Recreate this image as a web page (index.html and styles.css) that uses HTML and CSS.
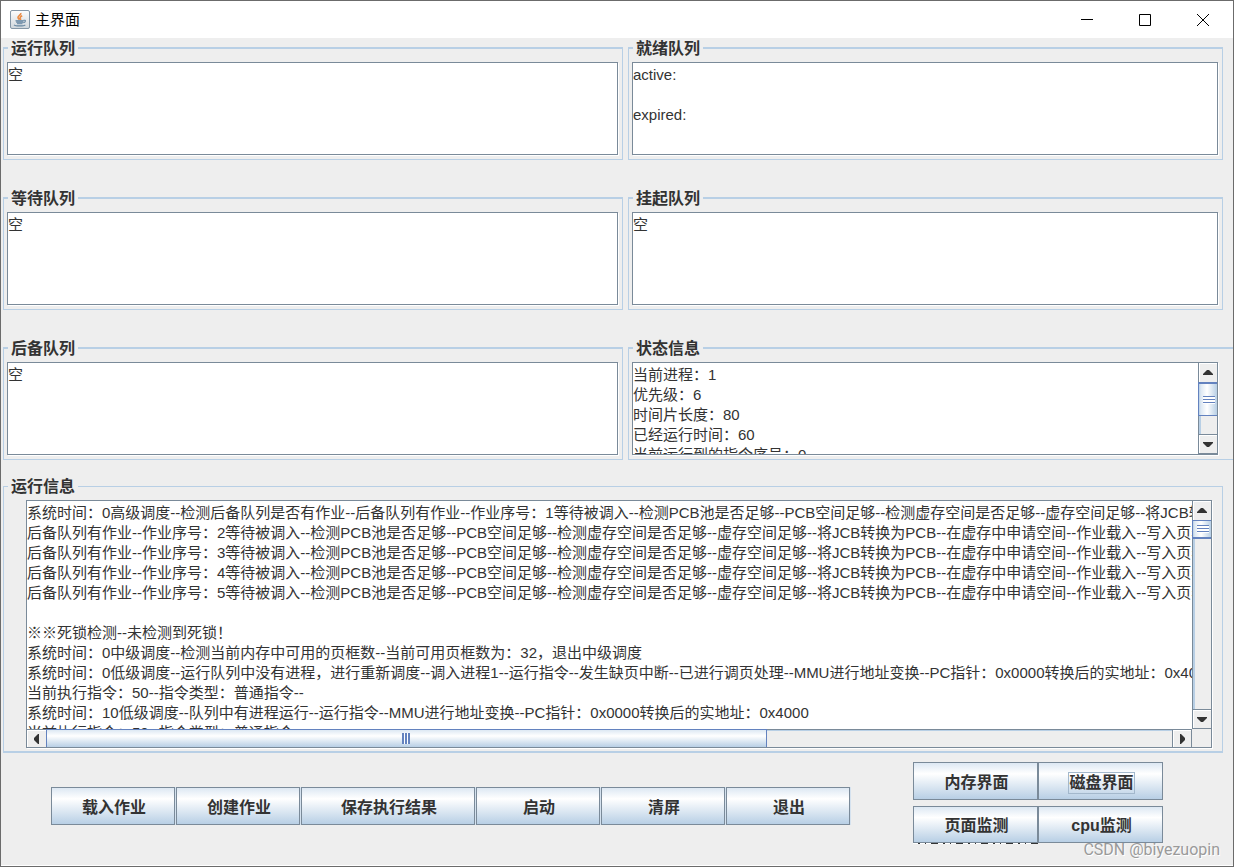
FILE: index.html
```html
<!DOCTYPE html>
<html lang="zh-CN">
<head>
<meta charset="utf-8">
<title>主界面</title>
<link rel="stylesheet" href="styles.css">
</head>
<body>
<div class="window">
  <header class="titlebar">
    <svg class="app-icon" viewBox="0 0 20 19" aria-hidden="true">
      <defs><linearGradient id="tile" x1="0" y1="0" x2="0" y2="1"><stop offset="0" stop-color="#fdfdfd"/><stop offset="1" stop-color="#cfd6dc"/></linearGradient></defs>
      <rect x="0.5" y="0.5" width="19" height="18" rx="1.500" fill="url(#tile)" stroke="#8496a6"/>
      <path d="M10.800 3c.8 1.800-3 2.700-2.800 4.500 0 1 1.200 1.500 1.500 2.300M12.200 5.700c-1.700.8-2.400 1.500-2 2.600.3.700.8.800.1 1.700" fill="none" stroke="#ea8a42" stroke-width="1.600"/>
      <path d="M5.500 10.700h8.300M6.200 12.200h7M7 13.500h5.500" fill="none" stroke="#7d98b0" stroke-width="1.400"/>
      <path d="M13.500 10.300c2.600-.6 2.600 1.800-.2 2.500M4 14.800c1.500 1.500 10 1.400 11.300 0" fill="none" stroke="#6585a0" stroke-width="1.100"/>
    </svg>
    <h1 class="title">主界面</h1>
    <div class="controls">
      <button class="control" type="button" aria-label="最小化"><svg viewBox="0 0 12 12"><path d="M0 5.500h12"/></svg></button>
      <button class="control" type="button" aria-label="最大化"><svg viewBox="0 0 12 12"><path d="M.5.5h11v11H.5z"/></svg></button>
      <button class="control" type="button" aria-label="关闭"><svg viewBox="0 0 12 12"><path d="M0 0l12 12M12 0L0 12"/></svg></button>
    </div>
  </header>

  <main class="content">
    <div class="queues">
      <fieldset class="panel">
        <legend>运行队列</legend>
        <div class="box"><textarea class="text" aria-label="运行队列" wrap="off" readonly>空</textarea></div>
      </fieldset>
      <fieldset class="panel">
        <legend>就绪队列</legend>
        <div class="box"><textarea class="text" aria-label="就绪队列" wrap="off" readonly>active:

expired:</textarea></div>
      </fieldset>
      <fieldset class="panel">
        <legend>等待队列</legend>
        <div class="box"><textarea class="text" aria-label="等待队列" wrap="off" readonly>空</textarea></div>
      </fieldset>
      <fieldset class="panel">
        <legend>挂起队列</legend>
        <div class="box"><textarea class="text" aria-label="挂起队列" wrap="off" readonly>空</textarea></div>
      </fieldset>
      <fieldset class="panel">
        <legend>后备队列</legend>
        <div class="box"><textarea class="text" aria-label="后备队列" wrap="off" readonly>空</textarea></div>
      </fieldset>
      <fieldset class="panel panel-open">
        <legend>状态信息</legend>
        <div class="box box-v">
          <textarea class="text" aria-label="状态信息" wrap="off" readonly>当前进程：1
优先级：6
时间片长度：80
已经运行时间：60
当前运行到的指令序号：0</textarea>
          <div class="vbar">
            <button class="arrow" type="button" aria-label="向上"><svg viewBox="0 0 10 5"><path d="M4 0h2l4 4v1H0V4z"/></svg></button>
            <div class="track"><div class="thumb thumb-status"><span class="grip"></span></div></div>
            <button class="arrow" type="button" aria-label="向下"><svg viewBox="0 0 10 5"><path d="M0 0h10v1L6 5H4L0 1z"/></svg></button>
          </div>
        </div>
      </fieldset>
    </div>

    <fieldset class="panel panel-log">
      <legend>运行信息</legend>
      <div class="box box-v box-log">
        <textarea class="text" aria-label="运行信息" wrap="off" readonly>系统时间：0高级调度--检测后备队列是否有作业--后备队列有作业--作业序号：1等待被调入--检测PCB池是否足够--PCB空间足够--检测虚存空间是否足够--虚存空间足够--将JCB转换为PCB
后备队列有作业--作业序号：2等待被调入--检测PCB池是否足够--PCB空间足够--检测虚存空间是否足够--虚存空间足够--将JCB转换为PCB--在虚存中申请空间--作业载入--写入页表
后备队列有作业--作业序号：3等待被调入--检测PCB池是否足够--PCB空间足够--检测虚存空间是否足够--虚存空间足够--将JCB转换为PCB--在虚存中申请空间--作业载入--写入页表
后备队列有作业--作业序号：4等待被调入--检测PCB池是否足够--PCB空间足够--检测虚存空间是否足够--虚存空间足够--将JCB转换为PCB--在虚存中申请空间--作业载入--写入页表
后备队列有作业--作业序号：5等待被调入--检测PCB池是否足够--PCB空间足够--检测虚存空间是否足够--虚存空间足够--将JCB转换为PCB--在虚存中申请空间--作业载入--写入页表

※※死锁检测--未检测到死锁！
系统时间：0中级调度--检测当前内存中可用的页框数--当前可用页框数为：32，退出中级调度
系统时间：0低级调度--运行队列中没有进程，进行重新调度--调入进程1--运行指令--发生缺页中断--已进行调页处理--MMU进行地址变换--PC指针：0x0000转换后的实地址：0x4000
当前执行指令：50--指令类型：普通指令--
系统时间：10低级调度--队列中有进程运行--运行指令--MMU进行地址变换--PC指针：0x0000转换后的实地址：0x4000
当前执行指令：50--指令类型：普通指令--</textarea>
        <div class="vbar">
          <button class="arrow" type="button" aria-label="向上"><svg viewBox="0 0 10 5"><path d="M4 0h2l4 4v1H0V4z"/></svg></button>
          <div class="track"><div class="thumb thumb-log"><span class="grip"></span></div></div>
          <button class="arrow" type="button" aria-label="向下"><svg viewBox="0 0 10 5"><path d="M0 0h10v1L6 5H4L0 1z"/></svg></button>
        </div>
        <div class="hbar">
          <button class="arrow" type="button" aria-label="向左"><svg viewBox="0 0 5 10"><path d="M5 0v10H4L0 6V4l4-4z"/></svg></button>
          <div class="track"><div class="thumb"><span class="grip"></span></div></div>
          <button class="arrow" type="button" aria-label="向右"><svg viewBox="0 0 5 10"><path d="M0 0h1l4 4v2l-4 4H0z"/></svg></button>
        </div>
        <div class="corner"></div>
      </div>
    </fieldset>
  </main>

  <footer class="footer">
    <div class="actions">
      <button class="btn" type="button">载入作业</button>
      <button class="btn" type="button">创建作业</button>
      <button class="btn btn-wide" type="button">保存执行结果</button>
      <button class="btn" type="button">启动</button>
      <button class="btn" type="button">清屏</button>
      <button class="btn" type="button">退出</button>
    </div>
    <div class="views">
      <button class="btn" type="button">内存界面</button>
      <button class="btn" type="button"><span class="focus">磁盘界面</span></button>
      <button class="btn" type="button">页面监测</button>
      <button class="btn" type="button">cpu监测</button>
      <div class="sliver"></div>
    </div>
    <p class="watermark">CSDN @biyezuopin</p>
  </footer>
</div>
</body>
</html>
```
FILE: styles.css
```css
* {
  box-sizing: border-box;
}

body {
  margin: 0;
  background: #eeeeee;
  color: #333333;
  font: 15px/20px "Liberation Sans", "Noto Sans CJK SC", sans-serif;
}

button {
  font: inherit;
  color: inherit;
}

.window {
  display: flex;
  flex-direction: column;
  min-height: 100vh;
  border: 1px solid #6b6b6b;
  background: #eeeeee;
  overflow: hidden;
}

/* Title bar */
.titlebar {
  display: flex;
  align-items: center;
  height: 37px;
  padding: 0 1px 0 9px;
  background: #ffffff;
  color: #000000;
}

.app-icon {
  width: 20px;
  height: 19px;
}

.title {
  flex: 1;
  margin: 0 0 0 5px;
  font-size: 15px;
  font-weight: 400;
}

.controls {
  display: flex;
}

.control {
  display: flex;
  align-items: center;
  justify-content: center;
  width: 58px;
  height: 36px;
  padding: 0;
  border: 0;
  background: none;
}

.control svg {
  width: 12px;
  height: 12px;
  fill: none;
  stroke: #000000;
}

/* Titled panels */
.content {
  display: flex;
  flex-direction: column;
  gap: 16px;
  padding: 0 10px 0 2px;
}

.queues {
  display: grid;
  grid-template-columns: minmax(0, 620fr) minmax(0, 595fr);
  gap: 28px 5px;
}

.panel {
  min-width: 0;
  margin: 0;
  padding: 4px 4px 4px 3px;
  border: 1px solid #b8cfe5;
  border-top-width: 2px;
}

.panel legend {
  height: 20px;
  margin-left: 1px;
  padding: 0 3px;
  font-size: 16px;
  font-weight: 700;
  line-height: 22px;
}

.panel-open {
  margin-right: -10px;
  padding-right: 15px;
  border-right: 0;
}

.panel-log {
  padding: 4px 10px 3px 22px;
  border-top-width: 1px;
  border-bottom-width: 2px;
}

.panel-log legend {
  margin-left: -18px;
}

.box {
  display: grid;
  height: 93px;
  border: 1px solid #7a8a99;
  background: #ffffff;
  box-shadow: 1px 1px 0 #ffffff;
}

.box-v {
  grid-template-columns: minmax(0, 1fr) 19px;
}

.box-log {
  grid-template-rows: minmax(0, 1fr) 18px;
  height: 248px;
}

.text {
  display: block;
  width: 100%;
  height: 100%;
  min-height: 0;
  margin: 0;
  padding: 2px 0 0;
  border: 0;
  outline: 0;
  background: #ffffff;
  color: #333333;
  font: inherit;
  white-space: pre;
  overflow: hidden;
  resize: none;
}

/* Scroll bars */
.vbar,
.hbar {
  display: flex;
  min-width: 0;
  min-height: 0;
  background: #eeeeee;
}

.vbar {
  flex-direction: column;
  border-left: 1px solid #7a8a99;
}

.hbar {
  border-top: 1px solid #7a8a99;
}

.arrow {
  display: flex;
  flex: 0 0 19px;
  align-items: center;
  justify-content: center;
  padding: 0;
  border: 0 solid #7a8a99;
  background: #eeeeee;
  box-shadow: inset 1px 1px 0 #ffffff;
}

.vbar .arrow:last-child {
  flex-basis: 20px;
  border-width: 1px 0;
}

.hbar .arrow:last-child {
  flex-basis: 20px;
  border-width: 0 1px;
}

.arrow svg {
  width: 10px;
  height: 5px;
  fill: #333333;
}

.hbar .arrow svg {
  width: 5px;
  height: 10px;
}

.track {
  flex: 1;
  min-width: 0;
  min-height: 0;
}

.vbar .track {
  box-shadow: inset 2px 0 0 #b8cfe5;
}

.hbar .track {
  box-shadow: inset 0 1px 0 #b8cfe5;
}

.thumb {
  display: flex;
  align-items: center;
  justify-content: center;
  border: 0 solid #6382bf;
}

.vbar .thumb {
  margin-left: -1px;
  padding-left: 2px;
  border-width: 1px 0 1px 1px;
  background: linear-gradient(90deg, #b8cfe5, #dde8f3 10%, #ffffff 45%, #b8cfe5);
}

.hbar .thumb {
  width: 64%;
  height: 18px;
  margin-top: -1px;
  border-width: 1px 1px 0;
  background: linear-gradient(#dde8f3, #ffffff 35%, #b8cfe5);
}

.vbar .thumb-status {
  height: 66%;
  border-top-width: 2px;
}

.vbar .thumb-log {
  height: 10%;
  border-bottom-width: 2px;
}

.grip {
  width: 12px;
  height: 8px;
  background: repeating-linear-gradient(#6382bf 0 1px, #ffffff 1px 3px);
}

.hbar .grip {
  width: 8px;
  height: 11px;
  background: repeating-linear-gradient(90deg, #6382bf 0 2px, #ffffff 2px 3px);
}

.corner {
  background: #eeeeee;
}

/* Buttons */
.footer {
  display: flex;
  flex: 1;
  justify-content: space-between;
  align-items: flex-start;
  position: relative;
  padding: 9px 70px 20px 50px;
  border-bottom: 1px solid #ffffff;
}

.actions {
  display: flex;
  gap: 1px;
  margin-top: 25px;
}

.btn {
  width: 124px;
  height: 38px;
  padding: 3px 0 0 2px;
  border: 1px solid #7a8a99;
  background: linear-gradient(#dde8f3, #ffffff 30%, #b8cfe5);
  box-shadow: 1px 0 0 #d5e2ef;
  font-size: 16px;
  font-weight: 700;
}

.btn-wide {
  width: 174px;
}

.views {
  display: grid;
  grid-template-columns: 125px 125px;
  grid-template-rows: 38px 6px 37px 1px;
}

.views .btn {
  width: 125px;
  height: 100%;
  box-shadow: none;
}

.views .btn:nth-child(3),
.views .btn:nth-child(4) {
  grid-row: 3;
}

/* Top edge of a row hidden under the buttons */
.sliver {
  grid-row: 4;
  background: repeating-linear-gradient(90deg, #ffffff 0 5px, #333333 5px 7px, #ffffff 7px 12px, #333333 12px 13px, #ffffff 13px 18px, #333333 18px 25px);
}

.focus {
  display: inline-block;
  outline: 1px solid #a3b8cc;
}

.watermark {
  position: absolute;
  right: 13px;
  bottom: 5px;
  margin: 0;
  color: #9a9a9a;
  font: 16px/20px Roboto, sans-serif;
  text-shadow: 1px 1px 0 #ffffff;
}
```
